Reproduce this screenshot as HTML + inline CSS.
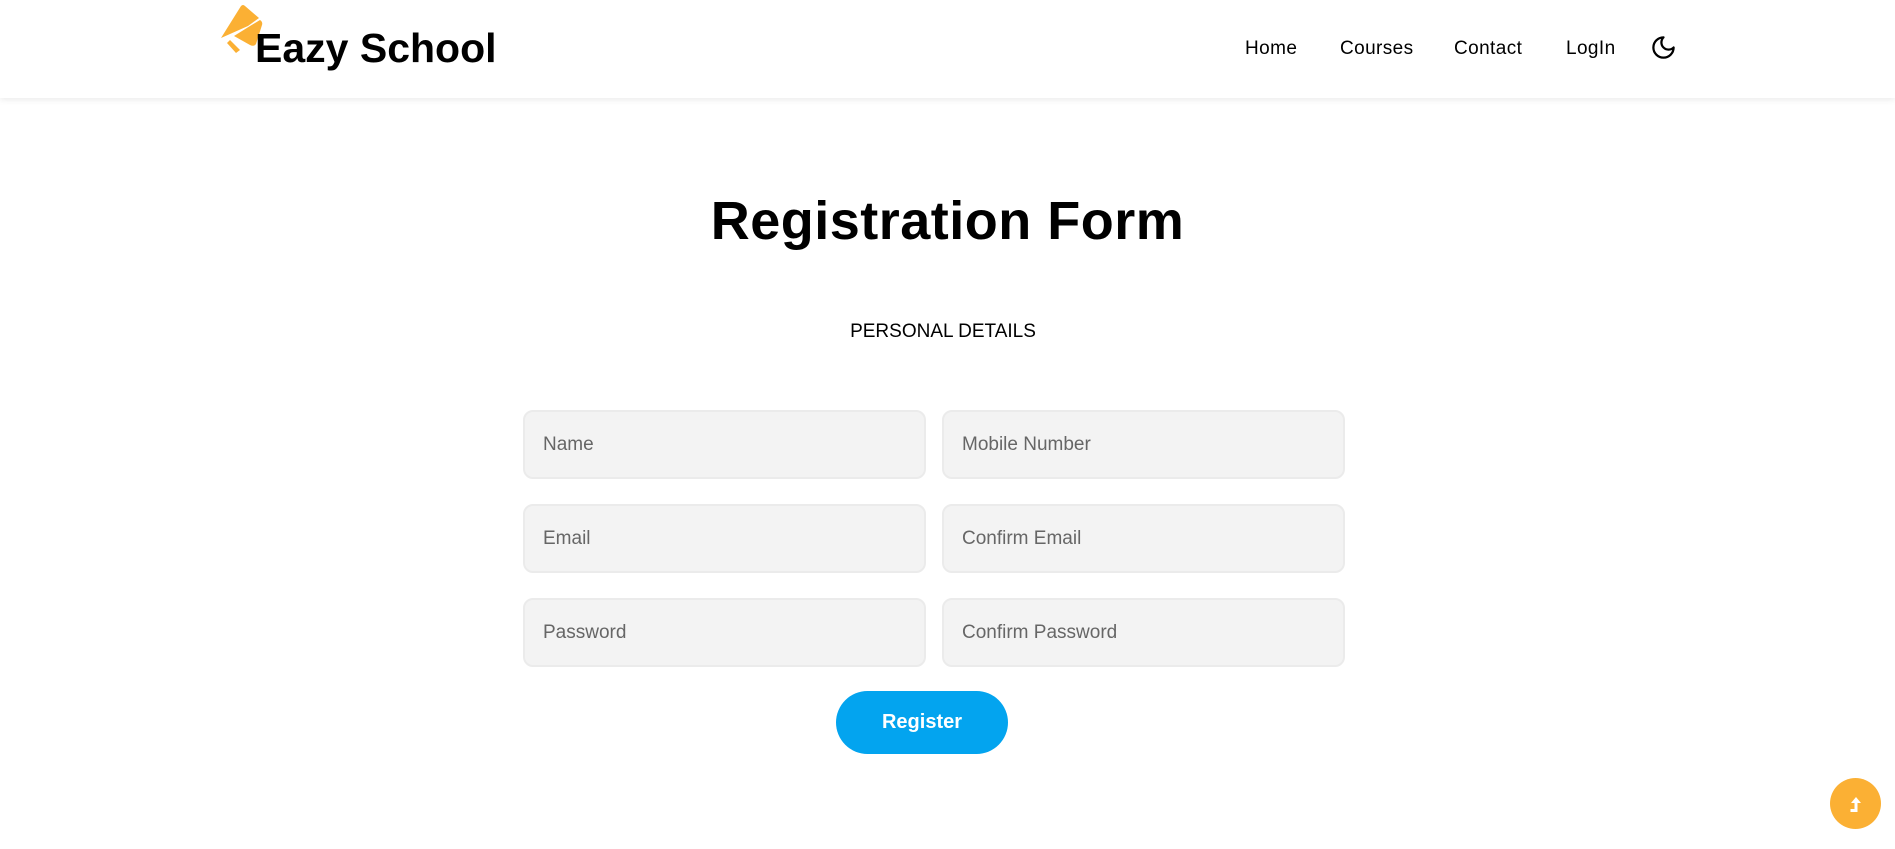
<!DOCTYPE html>
<html><head><meta charset="utf-8"><style>
*{margin:0;padding:0;box-sizing:border-box}
body{width:1895px;height:849px;background:#fff;font-family:"Liberation Sans",sans-serif;position:relative;overflow:hidden;color:#000}
header{position:absolute;left:0;top:0;width:1895px;height:98px;background:#fff;box-shadow:0 2px 6px rgba(0,0,0,0.08)}
.logo{position:absolute;left:255px;top:25px;font-size:41px;font-weight:bold;letter-spacing:0}
.nav{position:absolute;top:38px;font-size:19px;letter-spacing:0.4px}
h1{position:absolute;left:0;width:1895px;text-align:center;top:190px;font-size:54px;font-weight:bold;letter-spacing:0.5px}
.pd{position:absolute;left:0;width:1886px;text-align:center;top:321px;font-size:19px}
.in{position:absolute;width:403px;height:69px;background:#f3f3f3;border:2px solid #ebebeb;border-radius:10px;font-size:19px;color:#666;padding-left:18px;line-height:65px}
.btn{position:absolute;left:836px;top:691px;width:172px;height:63px;border-radius:32px;background:#03a4ef;color:#fff;font-weight:bold;font-size:20px;text-align:center;line-height:63px}
.up{position:absolute;left:1830px;top:778px;width:51px;height:51px;border-radius:50%;background:#fbb034}
</style></head><body>
<header>
<svg style="position:absolute;left:218px;top:2px" width="48" height="54" viewBox="0 0 48 54">
<path d="M3 36 L23 4 Q25 2 27 4 L41 16 L30 24 Z" fill="#fbb034"/>
<path d="M32 24 L42 18 Q45 20 44 23 L38 42 Q36 45 32 43 L16 34 Z" fill="#fbb034"/>
<path d="M12 38 L22 48 L18 51 L9 41 Z" fill="#fbb034"/>
</svg>
<div class="logo">Eazy School</div>
<div class="nav" style="left:1245px">Home</div>
<div class="nav" style="left:1340px">Courses</div>
<div class="nav" style="left:1454px">Contact</div>
<div class="nav" style="left:1566px">LogIn</div>
<svg style="position:absolute;left:1650px;top:34px" width="27" height="27" viewBox="0 0 24 24" fill="none" stroke="#000" stroke-width="2" stroke-linecap="round" stroke-linejoin="round"><path d="M12 3a6 6 0 0 0 9 9 9 9 0 1 1-9-9Z"/></svg>
</header>
<h1>Registration Form</h1>
<div class="pd">PERSONAL DETAILS</div>
<div class="in" style="left:523px;top:410px">Name</div>
<div class="in" style="left:942px;top:410px">Mobile Number</div>
<div class="in" style="left:523px;top:504px">Email</div>
<div class="in" style="left:942px;top:504px">Confirm Email</div>
<div class="in" style="left:523px;top:598px">Password</div>
<div class="in" style="left:942px;top:598px">Confirm Password</div>
<div class="btn">Register</div>
<div class="up"><svg width="51" height="51" viewBox="0 0 51 51"><path d="M26 19 L21 25 H24.5 V31 H20.5 V34 H27.5 V25 H31 Z" fill="#fff"/></svg></div>
</body></html>
